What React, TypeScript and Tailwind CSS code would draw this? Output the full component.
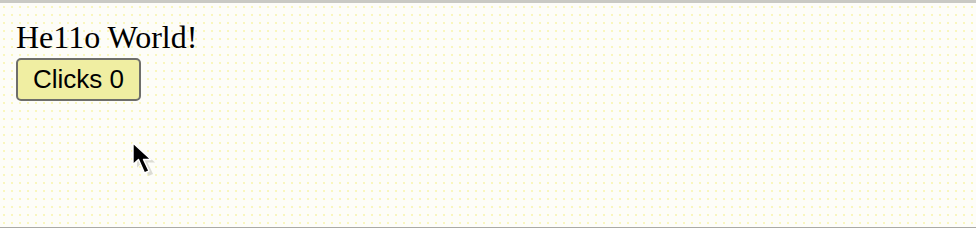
import React, { useState } from "react";

export default function App() {
  const [n, setN] = useState(0);
  return (
    <div className="relative w-[976px] h-[228px] overflow-hidden bg-[#fdfdf8] bg-[radial-gradient(circle,#f7f39c_0.6px,transparent_0.9px)] bg-[length:8px_8px] border-t-[3px] border-t-[#c9c9c4] border-b border-b-[#a9a9a4]">
      <div className="pl-4 pt-[15px] flex flex-col items-start">
        <div className="text-[32px] leading-[38px] text-black font-['Liberation_Serif',serif]">
          He11o World!
        </div>
        <button
          onClick={() => setN(n + 1)}
          className="mt-[2px] w-[125px] h-[43px] rounded-[5px] border-2 border-[#6e6e6a] bg-[#f0eea2] text-[26px] text-black font-['Liberation_Sans',Arial,sans-serif] flex items-center justify-center"
        >
          Clicks {n}
        </button>
      </div>
      <svg
        className="absolute left-[128px] top-[135px]"
        width="40"
        height="46"
        viewBox="0 0 40 46"
      >
        <path
          d="M5 5 L5 26.5 L10.5 21.5 L16.5 35 L21 33 L15.5 21.5 L23 21.5 Z"
          fill="#d6d6ce"
          opacity="0.85"
          transform="translate(4 3)"
        />
        <path
          d="M5 5 L5 26.5 L10.5 21.5 L16.5 35 L21 33 L15.5 21.5 L23 21.5 Z"
          fill="#000"
          stroke="#fff"
          strokeWidth="1.4"
          strokeLinejoin="round"
        />
      </svg>
    </div>
  );
}
